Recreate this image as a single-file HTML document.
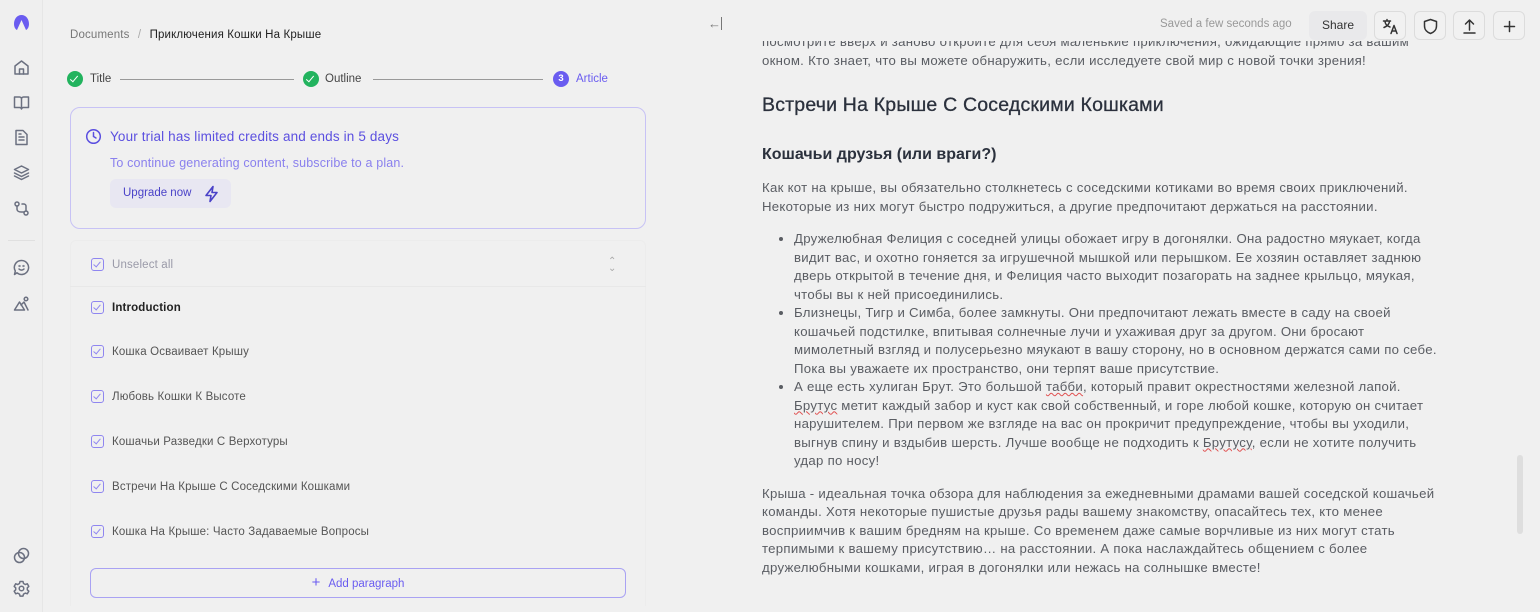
<!DOCTYPE html>
<html><head><meta charset="utf-8"><style>
*{box-sizing:border-box;margin:0;padding:0}
body{width:1540px;height:612px;overflow:hidden;background:#f0f0f0;font-family:"Liberation Sans",sans-serif;position:relative;color:#333}
.abs{position:absolute}
.side{left:0;top:0;width:43px;height:612px;border-right:1px solid #e6e6e6;background:#efefef}
.side svg{position:absolute;left:13px;width:17px;height:17px;fill:none;stroke:#6b7080;stroke-width:1.5;stroke-linecap:round;stroke-linejoin:round}
.cb{position:absolute;left:91px;width:13px;height:13px;border:1.3px solid #8f86f0;border-radius:3px}
.cb:after{content:"";position:absolute;left:3px;top:1px;width:3px;height:6px;border:solid #8f86f0;border-width:0 1.3px 1.3px 0;transform:rotate(40deg)}
.it{position:absolute;left:112px;font-size:11.5px;color:#555;letter-spacing:.15px}
.art{left:762px;width:682px;font-size:13.2px;color:#5a5d63;line-height:18.5px;letter-spacing:.28px}
.art p{margin-bottom:14px}
.art ul{padding-left:32px;margin-bottom:14px}
.art h2{font-size:19.5px;color:#2b313d;font-weight:normal;-webkit-text-stroke:.3px #2b313d;margin:26px 0 31px;letter-spacing:.2px}
.art h3{font-size:16px;color:#2b313d;font-weight:bold;margin-bottom:15px;letter-spacing:0}
.u{text-decoration:underline wavy #e05050;text-decoration-thickness:1px}
.tb{position:absolute;top:11px;width:32px;height:29px;border:1px solid #dcdcdc;border-radius:6px;background:#f1f1f1}
.tb svg{position:absolute;left:7px;top:6px;width:17px;height:17px;fill:none;stroke:#333;stroke-width:1.5;stroke-linecap:round;stroke-linejoin:round}
</style></head><body>
<div class="abs side">
<svg style="top:14px;fill:#6a5cf0;stroke:none" viewBox="0 0 17 17"><path d="M8.5 1C4 1 1 5 1 10c0 3 1.5 5.5 3 6L8.5 6 13 16c1.5-.5 3-3 3-6 0-5-3-9-7.5-9z"/></svg>
<svg style="top:59px" viewBox="0 0 17 17"><path d="M2 7l6.5-5 6.5 5v8H2z"/><path d="M6.5 15v-5h4v5"/></svg>
<svg style="top:94px" viewBox="0 0 17 17"><path d="M1.5 3h5a2 2 0 012 2v10a2 2 0 00-2-1.5h-5zM15.5 3h-5a2 2 0 00-2 2v10a2 2 0 012-1.5h5z"/></svg>
<svg style="top:129px" viewBox="0 0 17 17"><path d="M3 1.5h7l4 4v10H3z"/><path d="M6 8h5M6 11h5M6 5h2"/></svg>
<svg style="top:164px" viewBox="0 0 17 17"><path d="M8.5 2l7 3.5-7 3.5-7-3.5zM1.5 9l7 3.5 7-3.5M1.5 12l7 3.5 7-3.5"/></svg>
<svg style="top:200px" viewBox="0 0 17 17"><circle cx="4" cy="4" r="2"/><circle cx="13" cy="13" r="2"/><path d="M4 6v3c0 2 2 3 4 3h3M9 4h2c1 0 2 1 2 2v5"/></svg>
<div class="abs" style="left:8px;top:240px;width:27px;border-top:1px solid #e0e0e0"></div>
<svg style="top:259px" viewBox="0 0 17 17"><path d="M8.5 1.5a7 7 0 11-4.5 12.3L1.5 15.5l.8-3.5A7 7 0 018.5 1.5z"/><path d="M6 10c1.5 1.5 3.5 1.5 5 0"/><circle cx="6.5" cy="7" r=".4"/><circle cx="10.5" cy="7" r=".4"/></svg>
<svg style="top:295px" viewBox="0 0 17 17"><path d="M1.5 15l5-8 5 8zM8 10l3-3 4 8"/><circle cx="13" cy="4" r="1.8"/></svg>
<svg style="top:547px" viewBox="0 0 17 17"><circle cx="6.5" cy="10.5" r="5"/><circle cx="10.5" cy="6.5" r="5"/></svg>
<svg style="top:580px" viewBox="0 0 17 17"><circle cx="8.5" cy="8.5" r="2.3"/><path d="M7 1.5h3l.5 2 1.8 1 2-.7 1.5 2.6-1.5 1.4v2l1.5 1.4-1.5 2.6-2-.7-1.8 1-.5 2H7l-.5-2-1.8-1-2 .7-1.5-2.6 1.5-1.4v-2L1.2 6.4l1.5-2.6 2 .7 1.8-1z"/></svg>
</div>

<div class="abs" style="left:70px;top:29px;font-size:11.5px;color:#777;letter-spacing:.15px">Documents <span style="color:#aaa;margin:0 5px">/</span> <span style="color:#222">Приключения Кошки На Крыше</span></div>

<div class="abs" style="left:67px;top:71px;width:16px;height:16px;border-radius:50%;background:#22b35e"></div>
<div class="abs" style="left:72px;top:74px;width:4px;height:8px;border:solid #fff;border-width:0 1.8px 1.8px 0;transform:rotate(40deg)"></div>
<div class="abs" style="left:90px;top:73px;font-size:11.5px;color:#444">Title</div>
<div class="abs" style="left:120px;top:79px;width:174px;border-top:1px solid #999"></div>
<div class="abs" style="left:303px;top:71px;width:16px;height:16px;border-radius:50%;background:#22b35e"></div>
<div class="abs" style="left:308px;top:74px;width:4px;height:8px;border:solid #fff;border-width:0 1.8px 1.8px 0;transform:rotate(40deg)"></div>
<div class="abs" style="left:325px;top:73px;font-size:11.5px;color:#444">Outline</div>
<div class="abs" style="left:373px;top:79px;width:170px;border-top:1px solid #999"></div>
<div class="abs" style="left:553px;top:71px;width:16px;height:16px;border-radius:50%;background:#6a5cf0;color:#fff;font-size:9.5px;text-align:center;line-height:16px;font-weight:bold">3</div>
<div class="abs" style="left:576px;top:73px;font-size:11.5px;color:#6a5cf0">Article</div>

<div class="abs" style="left:70px;top:107px;width:576px;height:122px;border:1px solid #c7c2f5;border-radius:10px"></div>
<svg class="abs" style="left:85px;top:128px" width="17" height="17" viewBox="0 0 17 17" fill="none" stroke="#5b4fe0" stroke-width="1.5" stroke-linecap="round"><circle cx="8.5" cy="8.5" r="6.8"/><path d="M8.5 4.5v4l2.5 1.5"/></svg>
<div class="abs" style="left:110px;top:129px;font-size:13.5px;color:#5b4fe0;letter-spacing:.15px">Your trial has limited credits and ends in 5 days</div>
<div class="abs" style="left:110px;top:156px;font-size:12.5px;color:#8a80ee;letter-spacing:.15px">To continue generating content, subscribe to a plan.</div>
<div class="abs" style="left:110px;top:179px;width:121px;height:29px;border-radius:6px;background:#e8e7f2"></div>
<div class="abs" style="left:123px;top:187px;font-size:11.5px;color:#4a42c8">Upgrade now</div>
<svg class="abs" style="left:203px;top:185px" width="17" height="18" viewBox="0 0 17 18" fill="none" stroke="#4a42c8" stroke-width="1.6" stroke-linejoin="round"><path d="M10 1.5L3 10.5h5l-1 6 7-9H9z"/></svg>

<div class="abs" style="left:70px;top:240px;width:576px;height:366px;border:1px solid #ececec;border-bottom:none;border-radius:6px 6px 0 0"></div>
<div class="abs" style="left:70px;top:286px;width:576px;border-top:1px solid #e8e8e8"></div>
<div class="cb" style="top:258px"></div><div class="it" style="top:259px;color:#9a9aa8">Unselect all</div>
<div class="abs" style="left:608px;top:258px;font-size:10px;color:#aaa;line-height:7px">⌃<br>⌄</div>
<div class="cb" style="top:301px"></div><div class="it" style="top:302px;color:#222;font-weight:bold">Introduction</div>
<div class="cb" style="top:345px"></div><div class="it" style="top:346px">Кошка Осваивает Крышу</div>
<div class="cb" style="top:390px"></div><div class="it" style="top:391px">Любовь Кошки К Высоте</div>
<div class="cb" style="top:435px"></div><div class="it" style="top:436px">Кошачьи Разведки С Верхотуры</div>
<div class="cb" style="top:480px"></div><div class="it" style="top:481px">Встречи На Крыше С Соседскими Кошками</div>
<div class="cb" style="top:525px"></div><div class="it" style="top:526px">Кошка На Крыше: Часто Задаваемые Вопросы</div>
<div class="abs" style="left:90px;top:568px;width:536px;height:30px;border:1.3px solid #a9a2f3;border-radius:6px;text-align:center;font-size:11.5px;color:#6a5cf0;line-height:28px"><span style="font-size:15px;margin-right:8px">+</span>Add paragraph</div>

<div class="abs" style="left:708px;top:16px;font-size:13px;color:#777">←<span style="display:inline-block;width:1px;height:13px;background:#777;vertical-align:-2px"></span></div>

<div class="abs art" style="top:33px">
<p>посмотрите вверх и заново откройте для себя маленькие приключения, ожидающие прямо за вашим окном. Кто знает, что вы можете обнаружить, если исследуете свой мир с новой точки зрения!</p>
<h2>Встречи На Крыше С Соседскими Кошками</h2>
<h3>Кошачьи друзья (или враги?)</h3>
<p>Как кот на крыше, вы обязательно столкнетесь с соседскими котиками во время своих приключений. Некоторые из них могут быстро подружиться, а другие предпочитают держаться на расстоянии.</p>
<ul>
<li>Дружелюбная Фелиция с соседней улицы обожает игру в догонялки. Она радостно мяукает, когда видит вас, и охотно гоняется за игрушечной мышкой или перышком. Ее хозяин оставляет заднюю дверь открытой в течение дня, и Фелиция часто выходит позагорать на заднее крыльцо, мяукая, чтобы вы к ней присоединились.</li>
<li>Близнецы, Тигр и Симба, более замкнуты. Они предпочитают лежать вместе в саду на своей кошачьей подстилке, впитывая солнечные лучи и ухаживая друг за другом. Они бросают мимолетный взгляд и полусерьезно мяукают в вашу сторону, но в основном держатся сами по себе. Пока вы уважаете их пространство, они терпят ваше присутствие.</li>
<li>А еще есть хулиган Брут. Это большой <span class="u">табби</span>, который правит окрестностями железной лапой. <span class="u">Брутус</span> метит каждый забор и куст как свой собственный, и горе любой кошке, которую он считает нарушителем. При первом же взгляде на вас он прокричит предупреждение, чтобы вы уходили, выгнув спину и вздыбив шерсть. Лучше вообще не подходить к <span class="u">Брутусу</span>, если не хотите получить удар по носу!</li>
</ul>
<p>Крыша - идеальная точка обзора для наблюдения за ежедневными драмами вашей соседской кошачьей команды. Хотя некоторые пушистые друзья рады вашему знакомству, опасайтесь тех, кто менее восприимчив к вашим бредням на крыше. Со временем даже самые ворчливые из них могут стать терпимыми к вашему присутствию… на расстоянии. А пока наслаждайтесь общением с более дружелюбными кошками, играя в догонялки или нежась на солнышке вместе!</p>
</div>
<div class="abs" style="left:730px;top:0;width:810px;height:41px;background:#f0f0f0"></div>

<div class="abs" style="left:1160px;top:18px;font-size:11.5px;color:#999">Saved a few seconds ago</div>
<div class="abs" style="left:1309px;top:11px;width:58px;height:29px;border-radius:6px;background:#e9e9eb;text-align:center;line-height:29px;font-size:12px;color:#333">Share</div>
<div class="tb" style="left:1374px"><svg viewBox="0 0 17 17"><path d="M1.5 3h7M5 1.5V3M3 3c0 3 2 5 5 6M7.5 3c0 2.5-2 5-5.5 6.5M9 15.5l3-8 3 8M10 13h4"/></svg></div>
<div class="tb" style="left:1414px"><svg viewBox="0 0 17 17"><path d="M8.5 1.5l6 2v4.5c0 4-3 6.5-6 7.5-3-1-6-3.5-6-7.5V3.5z"/></svg></div>
<div class="tb" style="left:1453px"><svg viewBox="0 0 17 17"><path d="M8.5 12V2M4.5 6l4-4 4 4M3 15h11"/></svg></div>
<div class="tb" style="left:1493px"><svg viewBox="0 0 17 17"><path d="M8.5 3.5v10M3.5 8.5h10"/></svg></div>

<div class="abs" style="left:1517px;top:455px;width:6px;height:79px;border-radius:3px;background:#dedede"></div>
</body></html>
